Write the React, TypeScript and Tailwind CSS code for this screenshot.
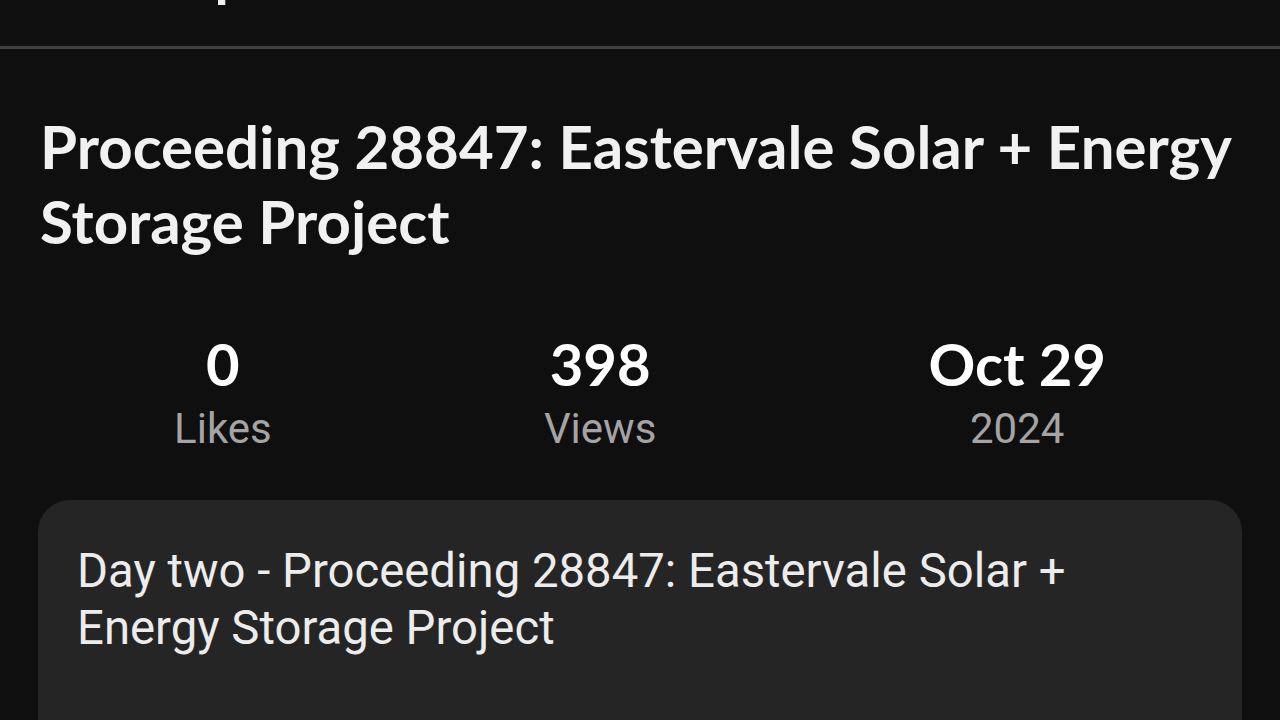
import React from "react";

const STATS = [
  { value: "0", label: "Likes" },
  { value: "398", label: "Views" },
  { value: "Oct 29", label: "2024" },
];

const heading = { fontFamily: 'Lato, "Noto Sans", sans-serif' };
const body = { fontFamily: "Roboto, sans-serif" };

export default function App() {
  return (
    <div className="min-h-screen w-full overflow-hidden bg-[#0f0f0f] text-[#f1f1f1]">
      {/* top bar, title scrolled mostly out of view */}
      <div className="h-[46px] overflow-hidden px-[50px]">
        <div className="-mt-[56px] text-[58px] font-bold leading-none whitespace-nowrap" style={heading}>
          Description
        </div>
      </div>
      <div className="h-[3px] bg-[#404040]" />

      <div className="px-[38px]">
        <h1 className="mt-[60px] px-[2px] text-[60px] font-bold leading-[75px] text-[#f1f1f1]" style={heading}>
          Proceeding 28847: Eastervale Solar + Energy Storage Project
        </h1>

        <div className="mt-[76px] flex justify-around">
          {STATS.map((s) => (
            <div key={s.label} className="flex flex-col items-center">
              <span className="text-[58px] font-bold leading-none text-white" style={heading}>
                {s.value}
              </span>
              <span className="mt-[15px] text-[42px] leading-none text-[#a4a4a4]" style={body}>
                {s.label}
              </span>
            </div>
          ))}
        </div>

        <div className="mt-[50px] rounded-[32px] bg-[#252525] px-[39px] pt-[43px] pb-[120px]">
          <p className="text-[47.3px] leading-[57px] text-[#ececec]" style={body}>
            Day two - Proceeding 28847: Eastervale Solar + Energy Storage Project
          </p>
        </div>
      </div>
    </div>
  );
}
